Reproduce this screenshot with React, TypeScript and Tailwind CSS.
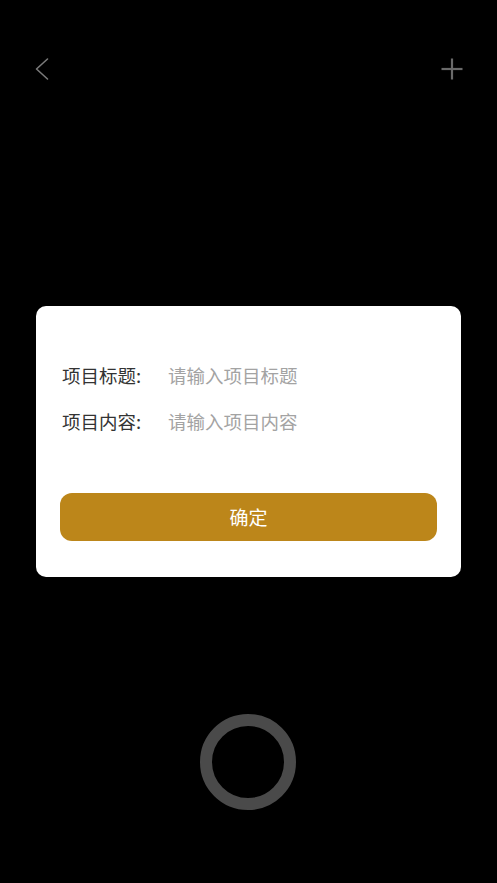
const cjk = { fontFamily: '"Noto Sans CJK SC", "Noto Sans", sans-serif' }

function BackIcon() {
  return (
    <svg width="14" height="24" viewBox="0 0 14 24" fill="none" stroke="#7a7a7a" strokeWidth="1.6" strokeLinecap="round" strokeLinejoin="round">
      <polyline points="12.5,2 1.5,12 12.5,22" />
    </svg>
  )
}

function PlusIcon() {
  return (
    <svg width="24" height="24" viewBox="0 0 24 24" fill="none" stroke="#6a6a6a" strokeWidth="2.2">
      <line x1="1.5" y1="12" x2="22.5" y2="12" />
      <line x1="12" y1="1.5" x2="12" y2="22.5" />
    </svg>
  )
}

function FieldRow({ label, placeholder }: { label: string; placeholder: string }) {
  return (
    <div className="flex items-center h-[26px]">
      <span className="w-[106px] shrink-0 text-[18.5px] text-[#333333] leading-[26px]">{label}</span>
      <input
        className="flex-1 min-w-0 bg-transparent outline-none text-[18.5px] leading-[26px] text-[#333333] placeholder:text-[#a3a3a3]"
        placeholder={placeholder}
        style={cjk}
      />
    </div>
  )
}

export default function App() {
  return (
    <div className="w-full h-[883px] bg-black flex flex-col overflow-hidden" style={cjk}>
      {/* Top bar */}
      <div className="mt-[57px] h-[24px] flex items-center justify-between pl-[35px] pr-[33px]">
        <BackIcon />
        <PlusIcon />
      </div>

      {/* Dialog */}
      <div className="mt-[225px] mx-[36px] h-[271px] bg-white rounded-[10px] pt-[56px] px-[26px]">
        <div className="flex flex-col gap-[20px]">
          <FieldRow label="项目标题:" placeholder="请输入项目标题" />
          <FieldRow label="项目内容:" placeholder="请输入项目内容" />
        </div>
        <button className="mt-[59px] -mx-[2px] w-[377px] h-[48px] rounded-[12px] bg-[#bc861a] text-white text-[19px] flex items-center justify-center">
          确定
        </button>
      </div>

      {/* Record button */}
      <div className="mt-[137px] flex justify-center">
        <div className="w-[96px] h-[96px] rounded-full border-[12px] border-[#4a4a4a] -ml-[1px]" />
      </div>
    </div>
  )
}
